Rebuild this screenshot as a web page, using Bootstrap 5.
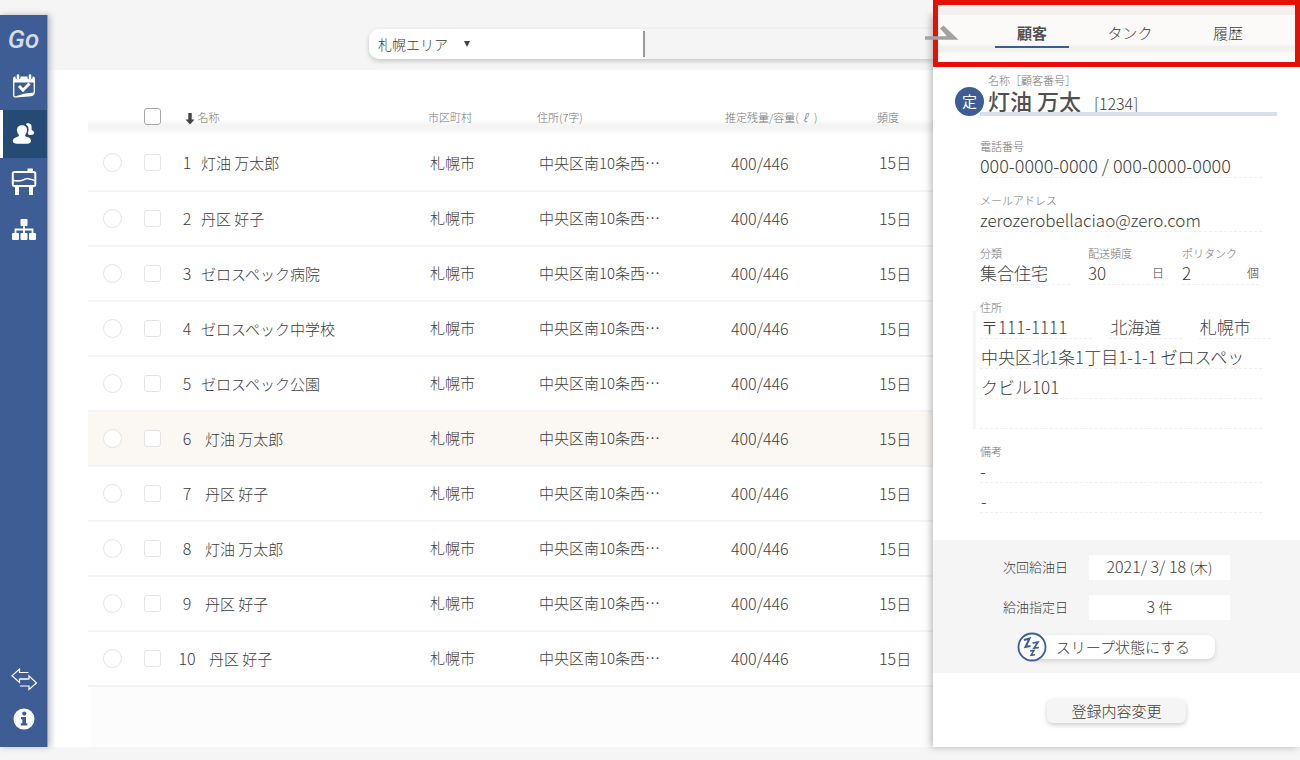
<!DOCTYPE html>
<html lang="ja">
<head>
<meta charset="utf-8">
<meta name="viewport" content="width=device-width, initial-scale=1">
<title>Go 顧客一覧</title>
<link href="https://cdn.jsdelivr.net/npm/bootstrap@5.3.0/dist/css/bootstrap.min.css" rel="stylesheet">
<style>
  :root { --navy: #3e5d95; --navy-deep: #254a74; --soft: #f5f5f5; --ink: #3c3c3c; --faint: #757575; }
  body { font-family: "Noto Sans CJK JP", sans-serif; font-size: 15px; line-height: 24px; font-weight: 300; color: var(--ink); background: var(--soft); }
  .app-shell { min-height: 100vh; padding: 15px 0 14px; }

  .side-nav { width: 48px; flex: none; background: var(--navy); border-right: 1px solid #8b9dc1; box-shadow: 2px 0 6px rgba(0,0,0,.25); position: relative; z-index: 2; }
  .side-nav .nav-link { height: 48px; padding: 0; color: #fff; display: flex; align-items: center; justify-content: center; }
  .side-nav .nav-link.active { background: var(--navy-deep); border-left: 3px solid #fff; padding-right: 3px; }
  .side-nav .short-link { height: 40px; }
  .brand-go { height: 47px; font: italic 500 26px/49px Roboto, sans-serif; color: #d3dae8; text-decoration: none; text-align: center; display: block; }

  .list-pane { min-width: 0; background: #fff; border-left: 7px solid #fbfbfb; }
  .tool-bar { height: 55px; background: var(--soft); padding: 14px 0 11px 321px; margin-left: -7px; }
  .search-group { height: 30px; flex: 1; border-radius: 10px 0 0 10px; box-shadow: 0 2px 5px rgba(0,0,0,.2); background: var(--soft); }
  .area-select { width: 274px; height: 30px; flex: none; border: 0; border-radius: 10px 0 0 10px; padding: 0 9px; font-size: 14px; line-height: 30px; font-weight: 300; color: var(--ink);
    background: #fff url("data:image/svg+xml,%3Csvg xmlns='http://www.w3.org/2000/svg' viewBox='0 0 8 6'%3E%3Cpath fill='%23444' d='M1 0h6L4 6z'/%3E%3C/svg%3E") no-repeat 94px 12px / 8px 6px; }
  .search-input { border: 0; border-radius: 0; background: transparent; height: 30px; padding: 0 10px; }
  .search-rule { width: 2px; flex: none; height: 26px; background: #999; }

  .list-wrap { padding-left: 33px; }
  .tank-table { table-layout: fixed; margin: 0; color: var(--ink); --bs-table-bg: transparent; }
  .tank-table th { height: 66px; padding: 0 0 7px; vertical-align: bottom; font-size: 11px; line-height: 24px; font-weight: 300; color: var(--faint); border: 0; white-space: nowrap;
    background: linear-gradient(#fff 49px, #f4f4f4 55px, #f4f4f4 59px, #fff 65px); }
  .tank-table td { height: 55px; padding: 0 0 1px; vertical-align: middle; border-bottom: 2px solid #f4f4f4; white-space: nowrap; }
  .tank-table tr.picked td { background: #fbf8f4; }
  .tank-table .form-check-input { display: block; margin: 0 auto; width: 17px; height: 17px; border: 1px solid #e4e4e4; background-color: #fff; }
  .tank-table .form-check-input[type=checkbox] { border-radius: 3px; }
  .tank-table .form-check-input[type=radio] { width: 19px; height: 19px; }
  .tank-table th .form-check-input { border-color: #a8a8a8; margin-bottom: 4px; }
  .tank-table .name-cell { padding-left: 9px; }
  .tank-table .sort-cell { padding-left: 16px; }
  .row-no { display: inline-block; width: 18px; margin-right: 5px; text-align: center; font-size: 16px; }
  .gap-mid .row-no { margin-right: 9px; }
  .gap-wide .row-no { margin-right: 13px; }
  .indent-s { padding-left: 2px !important; }
  .indent-l { padding-left: 6px !important; }
  .figure-text { font-size: 16px; }
  .list-rest { flex: 1; margin-left: 36px; background: #fcfcfc; }

  .detail-pane { width: 367px; flex: none; background: #fff; position: relative; z-index: 1; box-shadow: -2px 0 7px rgba(0,0,0,.28); }
  .close-arrow { position: absolute; left: -8px; top: 9px; padding: 0; border: 0; background: none; line-height: 0; z-index: 2; }
  .call-out { position: absolute; left: 0; right: 0; top: -15px; height: 67px; border: 5px solid #e60f00; pointer-events: none; z-index: 1; }
  .call-out::before { content: ""; display: block; height: 10px; background: #f3f0ef; }
  .tab-strip { height: 52px; padding-left: 62px; gap: 24px; background: linear-gradient(#fbfaf9 29px, #f1f0ef 32px, #f3f2f1 36px, #fbfafa 39px, #fbfbfb); }
  .tab-strip .nav-link { width: 74px; height: 33px; padding: 7px 0 0; text-align: center; color: var(--ink); line-height: 22px; border-radius: 0; border-bottom: 2px solid transparent; }
  .tab-strip .nav-link.active { font-weight: 700; color: #505050; border-color: var(--navy); }

  .tiny-label { font-size: 11px; line-height: 14px; height: 14px; color: var(--faint); font-weight: 300; margin: 0; display: block; }
  .name-head { margin: 6px 23px 0 22px; position: relative; }
  .name-head .tiny-label { padding-left: 33px; }
  .fixed-mark { width: 29px; height: 29px; flex: none; border-radius: 50%; background: var(--navy); color: #fff; font-size: 15px; line-height: 28px; font-weight: 400; text-align: center; position: relative; z-index: 1; }
  .name-row { gap: 4px; }
  .name-row h1 { font-size: 22px; line-height: 26px; font-weight: 500; color: #505050; margin: 0; }
  .name-row .cust-no { font-size: 16px; line-height: 26px; margin-left: 9px; padding-top: 3px; }
  .name-row::after { content: ""; position: absolute; left: 25px; right: 0; bottom: 0; height: 4px; background: #d8e0ec; }
  .detail-body { padding: 23px 38px 27px 47px; }
  .field-block { margin: 0 0 15px; }
  .field-value { font-size: 17px; line-height: 25px; height: 25px; border-bottom: 1px dashed #f0f0f0; white-space: nowrap; margin: 0; }
  .field-value.phone { font-size: 18px; }
  .type-grid { display: grid; grid-template-columns: 90fr 76fr 77fr; gap: 18px; padding-right: 3px; margin-top: -1px; }
  .place-grid { display: grid; grid-template-columns: 112fr 72fr 72fr; gap: 17px; margin: 0 -9px 0 0; }
  .place-grid .field-value { padding-left: 1px; }
  .address { position: relative; margin-bottom: 15px; }
  .address::before { content: ""; position: absolute; left: -7px; top: 11px; bottom: 0; width: 3px; background: var(--soft); }
  .lined { font-size: 17px; margin: 0; }
  .lined span { display: block; height: 30px; padding: 6px 0 0 1px; border-bottom: 1px dashed #f0f0f0; white-space: nowrap; line-height: 24px; }
  .unit { font-size: 12px; }

  .supply { background: var(--soft); padding: 15px 70px 14px; }
  .supply-row { margin-bottom: 15px; }
  .supply-row dt { width: 86px; font-size: 13px; line-height: 24px; font-weight: 300; }
  .supply-row dd { flex: 1; margin: 0; background: #fff; text-align: center; font-size: 16px; line-height: 23px; height: 25px; }
  .supply-row dd small { font-size: 14px; }
  .sleep-btn { position: relative; display: block; width: 185px; height: 24px; margin: 0 0 0 27px; padding: 0 0 0 1px; border: 0; border-radius: 8px; background: #fff; color: var(--ink); font-size: 15px; line-height: 22px; font-weight: 300; box-shadow: 0 2px 5px rgba(0,0,0,.14); }
  .sleep-btn svg { position: absolute; left: -13px; top: -3px; }
  .edit-btn { display: block; width: 139px; height: 24px; margin: 26px auto 24px; padding: 0; border: 0; border-radius: 6px; background: var(--soft); color: var(--ink); font-size: 15px; line-height: 22px; font-weight: 300; box-shadow: 0 2px 5px rgba(0,0,0,.2); }
</style>
</head>
<body>
<div class="app-shell d-flex">
  <nav class="side-nav nav d-flex flex-column flex-nowrap" aria-label="メイン">
    <a class="brand-go" href="#">Go</a>
    <a class="nav-link" href="#" aria-label="予定">
      <svg width="24" height="24" viewBox="0 0 24 24" fill="none" stroke="#fff">
        <path d="M1.700 7V21Q1.700 23 3.700 22.800L19 21.500Q22.300 21 22.300 18V7" stroke-width="1.300"/>
        <path d="M1 8.500V4.500Q1 2.600 3 2.600H21Q23 2.600 23 4.500V8.500Z" fill="#fff" stroke="none"/>
        <path d="M3 22.500L13 19.500 22 18.500Q21.500 21.500 18.500 22Z" fill="#fff" stroke="none"/>
        <circle cx="6" cy="2.800" r="2.600" fill="#3e5d95" stroke="none"/><circle cx="18" cy="2.800" r="2.600" fill="#3e5d95" stroke="none"/>
        <path d="M6 1.500V4.500M18 1.500V4.500" stroke-width="2.600" stroke-linecap="round"/>
        <path d="M7 12L11 16.200 17.500 9.500" stroke-width="3"/>
      </svg>
    </a>
    <a class="nav-link active" href="#" aria-label="顧客" aria-current="page">
      <svg width="24" height="24" viewBox="0 0 24 24" fill="#fff">
        <path d="M14.500 1.500C18 .5 20.300 3 19.500 6.500Q19 8.300 21.500 9.300Q23 10.500 21.500 12.300Q20 13.300 16.500 12.800Q15.300 11.500 16.300 9.500Q17.500 4.500 14 2.500Z"/>
        <path d="M10 3.200C13.800 3.200 15.400 5.700 15 8.800Q14.500 12 13 13.200Q12.800 14.400 15 14.900Q19 15.700 19 18.700Q18.800 21.500 15 21.800H5Q1 21.500 .8 18.900Q.8 15.900 5 14.900Q7.200 14.400 7 13.200Q5.400 12 5 8.800C4.600 5.700 6.300 3.200 10 3.200Z"/>
      </svg>
    </a>
    <a class="nav-link" href="#" aria-label="タンク">
      <svg width="26" height="28" viewBox="0 0 26 28" fill="none" stroke="#fff">
        <rect x="1.800" y="4" width="22.500" height="14" rx="1.500" stroke-width="2"/>
        <path d="M16.500 .5H22V4H16.500Z" fill="#fff" stroke="none"/>
        <path d="M2 12.500Q8 13.500 12 12T16.500 10.500 24 12.500" stroke-width="1.600"/>
        <path d="M6 18V27M20 18V27" stroke-width="4"/>
      </svg>
    </a>
    <a class="nav-link" href="#" aria-label="組織">
      <svg width="26" height="24" viewBox="0 0 26 24" fill="#fff">
        <rect x="9.500" y="1" width="7" height="7" rx="1"/><rect x="1" y="15" width="7" height="7" rx="1"/><rect x="9.500" y="15" width="7" height="7" rx="1"/><rect x="18" y="15" width="7" height="7" rx="1"/>
        <path d="M4.500 16V11.500H21.500V16M13 8V16" fill="none" stroke="#fff" stroke-width="1.800"/>
      </svg>
    </a>
    <div class="mt-auto pb-2">
      <a class="nav-link short-link" href="#" aria-label="切り替え">
        <svg width="28" height="24" viewBox="0 0 28 24" fill="none" stroke="#fff" stroke-width="1.200">
          <path d="M18.500 5.500H9.500V2L2 8.800 9.500 15.500V12H18.500"/><path d="M10 12H19V8.800L26.500 16 19 22.500V19H10"/>
        </svg>
      </a>
      <a class="nav-link short-link" href="#" aria-label="情報">
        <svg width="22" height="22" viewBox="0 0 22 22"><circle cx="11" cy="11" r="10.500" fill="#fff"/><g fill="#3e5d95"><circle cx="11.300" cy="5.600" r="2.100"/><path d="M8 9H13V15.300H14.400V17.500H7.800V15.300H9.300V11.200H8Z"/></g></svg>
      </a>
    </div>
  </nav>

  <main class="list-pane d-flex flex-column flex-grow-1">
    <div class="tool-bar d-flex">
      <form class="search-group d-flex align-items-center">
        <select class="form-select area-select" aria-label="エリア"><option>札幌エリア</option></select>
        <span class="search-rule"></span>
        <input class="form-control search-input" type="text" aria-label="検索">
      </form>
    </div>
    <div class="list-wrap">
      <table class="table tank-table">
        <colgroup><col style="width:48px"><col style="width:33px"><col style="width:259px"><col style="width:109px"><col style="width:188px"><col style="width:152px"><col></colgroup>
        <thead>
          <tr>
            <th></th>
            <th><input class="form-check-input" type="checkbox" aria-label="すべて選択"></th>
            <th scope="col" class="sort-cell"><svg width="10" height="13" viewBox="0 0 10 13" fill="#444"><path d="M3.300 0H6.700V6.500H9.500L5 11.500 .5 6.500H3.300Z"/></svg> 名称</th>
            <th scope="col">市区町村</th>
            <th scope="col">住所(7字)</th>
            <th scope="col">推定残量/容量(<i class="px-1">ℓ</i> )</th>
            <th scope="col">頻度</th>
          </tr>
        </thead>
        <tbody id="rows"></tbody>
      </table>
    </div>
    <div class="list-rest"></div>
  </main>

  <aside class="detail-pane">
    <button class="close-arrow" type="button" aria-label="閉じる"><svg width="34" height="17" viewBox="0 0 34 17"><path d="M0 12.300H22L15 4.500 18.500 1.500 33.500 15.800H0Z" fill="#a3a2a0"/></svg></button>
    <div class="call-out"></div>
    <nav class="nav tab-strip flex-nowrap" aria-label="詳細">
      <a class="nav-link active" href="#" aria-current="page">顧客</a>
      <a class="nav-link" href="#">タンク</a>
      <a class="nav-link" href="#">履歴</a>
    </nav>

    <header class="name-head">
      <span class="tiny-label">名称［顧客番号］</span>
      <div class="name-row d-flex">
        <span class="fixed-mark">定</span>
        <h1>灯油 万太</h1>
        <span class="cust-no">[1234]</span>
      </div>
    </header>

    <div class="detail-body">
      <dl class="field-block">
        <dt class="tiny-label">電話番号</dt>
        <dd class="field-value phone">000-0000-0000 / 000-0000-0000</dd>
      </dl>
      <dl class="field-block">
        <dt class="tiny-label">メールアドレス</dt>
        <dd class="field-value">zerozerobellaciao@zero.com</dd>
      </dl>
      <div class="type-grid">
        <dl class="field-block mb-0">
          <dt class="tiny-label">分類</dt>
          <dd class="field-value">集合住宅</dd>
        </dl>
        <dl class="field-block mb-0">
          <dt class="tiny-label">配送頻度</dt>
          <dd class="field-value d-flex justify-content-between">30 <span class="unit">日</span></dd>
        </dl>
        <dl class="field-block">
          <dt class="tiny-label">ポリタンク</dt>
          <dd class="field-value d-flex justify-content-between">2 <span class="unit">個</span></dd>
        </dl>
      </div>
      <dl class="address">
        <dt class="tiny-label">住所</dt>
        <dd class="place-grid"><span class="field-value">〒111-1111</span><span class="field-value">北海道</span><span class="field-value">札幌市</span></dd>
        <dd class="lined"><span>中央区北1条1丁目1-1-1 ゼロスペッ</span><span>クビル101</span><span></span></dd>
      </dl>
      <dl class="mb-0">
        <dt class="tiny-label">備考</dt>
        <dd class="field-value">-</dd>
        <dd class="lined"><span>-</span></dd>
      </dl>
    </div>

    <section class="supply">
      <dl class="mb-0">
        <div class="supply-row d-flex"><dt>次回給油日</dt><dd>2021/ 3/ 18 <small>(木)</small></dd></div>
        <div class="supply-row d-flex"><dt>給油指定日</dt><dd>3 <small>件</small></dd></div>
      </dl>
      <button class="sleep-btn" type="button">
        <svg width="30" height="30" viewBox="0 0 30 30" fill="none" stroke="#3e5d95"><circle cx="15" cy="15" r="13.500" fill="#fff" stroke-width="1.800"/><path d="M7 8L12.500 6.500 8.500 15 13.500 14" stroke-width="2"/><path d="M15.500 11L21 10.200 17 16.200 22 15.500" stroke-width="1.700"/><path d="M13 19L17 18.500 14 23.200 18 22.700" stroke-width="1.500"/></svg>
        スリープ状態にする
      </button>
    </section>
    <button class="edit-btn" type="button">登録内容変更</button>
  </aside>
</div>

<script src="https://cdn.jsdelivr.net/npm/bootstrap@5.3.0/dist/js/bootstrap.bundle.min.js"></script>
<script>
  const names = ["灯油 万太郎", "丹区 好子", "ゼロスペック病院", "ゼロスペック中学校", "ゼロスペック公園", "灯油 万太郎", "丹区 好子", "灯油 万太郎", "丹区 好子", "丹区 好子"];
  document.getElementById("rows").innerHTML = names.map((name, i) => {
    const no = i + 1;
    const gap = no > 9 ? "gap-wide" : no > 5 ? "gap-mid" : "";
    return `<tr class="${no === 6 ? "picked" : ""}">
      <td><input class="form-check-input" type="radio" name="current" aria-label="${name}を表示"></td>
      <td><input class="form-check-input" type="checkbox" aria-label="${name}を選択"></td>
      <td class="name-cell ${gap}"><span class="row-no">${no}</span>${name}</td>
      <td class="indent-s">札幌市</td>
      <td class="indent-s">中央区南10条西…</td>
      <td class="indent-l figure-text">400/446</td>
      <td class="indent-s"><span class="figure-text">15</span>日</td>
    </tr>`;
  }).join("");
</script>
</body>
</html>
